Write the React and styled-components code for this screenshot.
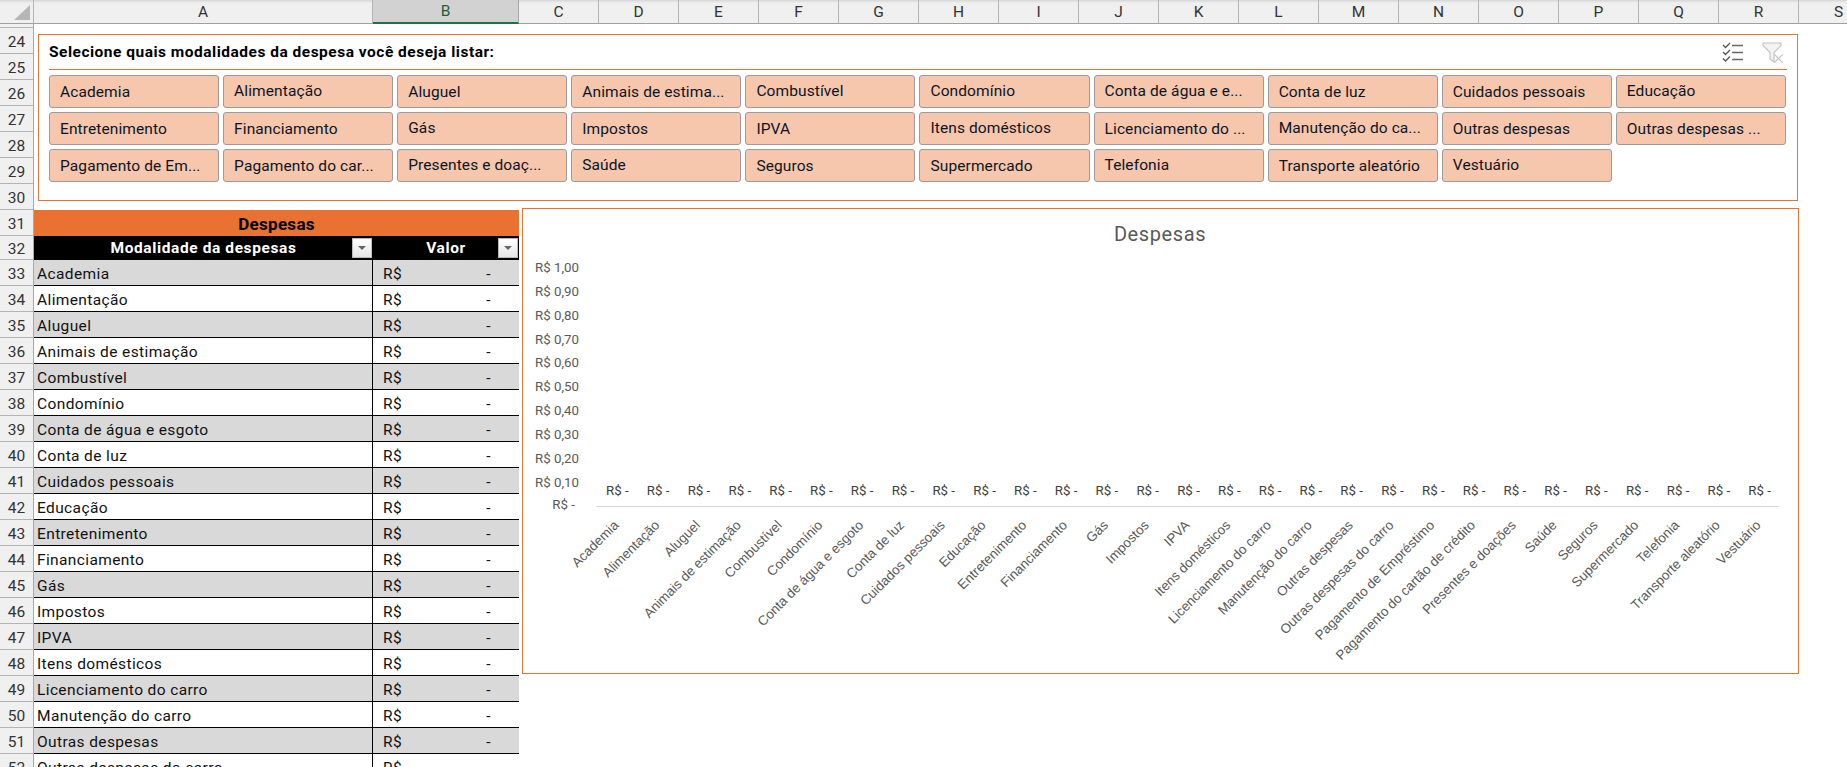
import React from "react";
import styled, { createGlobalStyle } from "styled-components";

const ORANGE = "#E97132";
const FONT = `Roboto, "Liberation Sans", sans-serif`;

const GlobalStyle = createGlobalStyle`
  html, body {
    margin: 0;
    padding: 0;
    height: 100%;
    overflow: hidden;
    background: #ffffff;
    font-family: ${FONT};
  }
`;

// Excel frame

const Page = styled.div`
  width: 1847px;
  height: 767px;
  overflow: hidden;
`;

const ColumnBar = styled.div`
  display: flex;
  height: 24px;
  box-sizing: border-box;
  background: linear-gradient(#d6d6d6 0, #efefef 3px, #f0f0f0 100%);
`;

const Corner = styled.div`
  width: 34px;
  flex: none;
  box-sizing: border-box;
  border-right: 1px solid #b4b4b4;
  border-bottom: 1px solid #a0a0a0;
  position: relative;
  display: flex;
  align-items: flex-end;
  justify-content: flex-end;
  padding: 0 3px 3px 0;
`;

const CornerMark = styled.div`
  width: 16px;
  height: 15px;
  background: #b6b6b6;
  clip-path: polygon(100% 0, 100% 100%, 0 100%);
`;

const ColumnCell = styled.div`
  width: ${(p) => p.$width}px;
  flex: none;
  box-sizing: border-box;
  display: flex;
  align-items: center;
  justify-content: center;
  font-size: 15.5px;
  color: ${(p) => (p.$active ? "#1f5f3d" : "#333333")};
  background: ${(p) => (p.$active ? "#d2d2d2" : "transparent")};
  border-right: 1px solid ${(p) => (p.$active ? "#a8a8a8" : "#b4b4b4")};
  border-bottom: ${(p) => (p.$active ? "2px solid #1e7145" : "1px solid #a0a0a0")};
`;

const Body = styled.div`
  display: flex;
  align-items: flex-start;
`;

const RowBar = styled.div`
  width: 34px;
  flex: none;
  display: flex;
  flex-direction: column;
  background: #f0f0f0;
  border-right: 1px solid #a8a8a8;
  box-sizing: border-box;
`;

const RowSliver = styled.div`
  height: 4px;
  box-sizing: border-box;
  border-bottom: 1px solid #b4b4b4;
`;

const RowCell = styled.div`
  height: ${(p) => p.$height}px;
  flex: none;
  box-sizing: border-box;
  display: flex;
  align-items: center;
  justify-content: center;
  padding-top: 3px;
  font-size: 15.5px;
  color: #333333;
  border-bottom: 1px solid #b4b4b4;
`;

const Sheet = styled.div`
  flex: 1;
  min-width: 0;
  padding-top: 10px;
  display: flex;
  flex-direction: column;
  gap: 7px;
`;

// Slicer

const Slicer = styled.section`
  width: 1760px;
  height: 167px;
  margin-left: 4px;
  box-sizing: border-box;
  border: 1px solid ${ORANGE};
  padding: 0 10px;
  display: flex;
  flex-direction: column;
`;

const SlicerHeader = styled.header`
  height: 35px;
  flex: none;
  box-sizing: border-box;
  border-bottom: 1px solid ${ORANGE};
  display: flex;
  align-items: center;
  justify-content: space-between;
  padding-right: 4px;
`;

const SlicerTitle = styled.h2`
  margin: 0;
  font-size: 15.5px;
  font-weight: 700;
  color: #000000;
  letter-spacing: 0.5px;
`;

const SlicerTools = styled.div`
  display: flex;
  gap: 19px;
  align-items: center;
`;

const ButtonGrid = styled.div`
  margin-top: 5px;
  display: grid;
  grid-template-columns: repeat(10, 170.1px);
  grid-auto-rows: 33px;
  column-gap: 4px;
  row-gap: 4px;
`;

const SlicerButton = styled.div`
  box-sizing: border-box;
  background: #f6c6ad;
  border: 1px solid #9b9b9b;
  border-radius: 3px;
  display: flex;
  align-items: center;
  padding: 0 0 ${(p) => (p.$lift ? 2 : 0)}px 10px;
  font-size: 15.5px;
  letter-spacing: 0.1px;
  color: #0c1522;
  white-space: nowrap;
  overflow: hidden;
`;

// Table + chart

const Content = styled.div`
  display: flex;
  align-items: flex-start;
  gap: 3px;
`;

const Table = styled.div`
  width: 485px;
  flex: none;
  padding-top: 2px;
  display: flex;
  flex-direction: column;
`;

const TableTitle = styled.div`
  height: 26px;
  background: ${ORANGE};
  display: flex;
  align-items: center;
  justify-content: center;
  font-size: 17px;
  letter-spacing: 0.3px;
  font-weight: 700;
  color: #000000;
  padding-top: 2px;
  box-sizing: border-box;
`;

const HeadRow = styled.div`
  height: 24px;
  display: grid;
  grid-template-columns: 339px 146px;
  background: #000000;
`;

const HeadCell = styled.div`
  display: flex;
  align-items: center;
  justify-content: center;
  position: relative;
  color: #ffffff;
  font-size: 15.5px;
  letter-spacing: 0.6px;
  font-weight: 700;
`;

const FilterButton = styled.span`
  position: absolute;
  right: 1px;
  top: 2px;
  width: 20px;
  height: 20px;
  box-sizing: border-box;
  border: 1px solid #bbbbbb;
  background: linear-gradient(#ffffff, #e6e6e6);
  display: flex;
  align-items: center;
  justify-content: center;

  &::after {
    content: "";
    border-left: 4px solid transparent;
    border-right: 4px solid transparent;
    border-top: 4px solid #666666;
  }
`;

const DataRow = styled.div`
  height: 26px;
  flex: none;
  box-sizing: border-box;
  display: grid;
  grid-template-columns: 339px 146px;
  background: ${(p) => (p.$shaded ? "#d9d9d9" : "#ffffff")};
  border-bottom: 1px solid #000000;
  font-size: 15.5px;
  letter-spacing: 0.38px;
  color: #111111;
`;

const NameCell = styled.div`
  box-sizing: border-box;
  border-right: 1px solid #000000;
  padding: 3px 0 0 3px;
  display: flex;
  align-items: center;
  white-space: nowrap;
`;

const ValueCell = styled.div`
  padding: 3px 28px 0 10px;
  display: flex;
  align-items: center;
  justify-content: space-between;
`;

const ChartBox = styled.div`
  width: 1277px;
  height: 466px;
  flex: none;
  box-sizing: border-box;
  border: 1px solid ${ORANGE};
  background: #ffffff;
`;

const ChartSvg = styled.svg`
  display: block;
  width: 1275px;
  height: 464px;
`;

const ChartTitle = styled.text`
  font-family: ${FONT};
  font-size: 20px;
  letter-spacing: 0.6px;
  fill: #595959;
  text-anchor: middle;
`;

const AxisLabel = styled.text`
  font-family: ${FONT};
  font-size: 13.3px;
  fill: #595959;
  text-anchor: end;
`;

const DataLabel = styled.text`
  font-family: ${FONT};
  font-size: 13.3px;
  fill: #404040;
  text-anchor: middle;
`;

const CategoryLabel = styled.text`
  font-family: "Liberation Sans", sans-serif;
  font-size: 13.4px;
  fill: #595959;
  text-anchor: end;
`;

const columns = [
  ["A", 339],
  ["B", 146],
  ..."CDEFGHIJKLMNOPQRS".split("").map((c) => [c, 80]),
];

const rowNumbers = [];
for (let n = 24; n <= 52; n++) rowNumbers.push(n);

const slicerItems = [
  ["Academia"],
  ["Alimentação", true],
  ["Aluguel"],
  ["Animais de estima..."],
  ["Combustível", true],
  ["Condomínio", true],
  ["Conta de água e e...", true],
  ["Conta de luz"],
  ["Cuidados pessoais"],
  ["Educação", true],
  ["Entretenimento"],
  ["Financiamento"],
  ["Gás", true],
  ["Impostos"],
  ["IPVA"],
  ["Itens domésticos", true],
  ["Licenciamento do ..."],
  ["Manutenção do ca...", true],
  ["Outras despesas"],
  ["Outras despesas ..."],
  ["Pagamento de Em..."],
  ["Pagamento do car..."],
  ["Presentes e doaç...", true],
  ["Saúde", true],
  ["Seguros"],
  ["Supermercado"],
  ["Telefonia", true],
  ["Transporte aleatório"],
  ["Vestuário", true],
];

const tableRows = [
  "Academia",
  "Alimentação",
  "Aluguel",
  "Animais de estimação",
  "Combustível",
  "Condomínio",
  "Conta de água e esgoto",
  "Conta de luz",
  "Cuidados pessoais",
  "Educação",
  "Entretenimento",
  "Financiamento",
  "Gás",
  "Impostos",
  "IPVA",
  "Itens domésticos",
  "Licenciamento do carro",
  "Manutenção do carro",
  "Outras despesas",
  "Outras despesas do carro",
];

const categories = [
  "Academia",
  "Alimentação",
  "Aluguel",
  "Animais de estimação",
  "Combustível",
  "Condomínio",
  "Conta de água e esgoto",
  "Conta de luz",
  "Cuidados pessoais",
  "Educação",
  "Entretenimento",
  "Financiamento",
  "Gás",
  "Impostos",
  "IPVA",
  "Itens domésticos",
  "Licenciamento do carro",
  "Manutenção do carro",
  "Outras despesas",
  "Outras despesas do carro",
  "Pagamento de Empréstimo",
  "Pagamento do cartão de crédito",
  "Presentes e doações",
  "Saúde",
  "Seguros",
  "Supermercado",
  "Telefonia",
  "Transporte aleatório",
  "Vestuário",
];

const axisTicks = ["R$ 1,00", "R$ 0,90", "R$ 0,80", "R$ 0,70", "R$ 0,60", "R$ 0,50", "R$ 0,40", "R$ 0,30", "R$ 0,20", "R$ 0,10"];

function MultiSelectIcon() {
  return (
    <svg width="21" height="20" viewBox="0 0 21 20" fill="none">
      <path d="M1 3l2.5 2.5L8 1M1 10l2.5 2.5L8 8M1 16.5L3.5 19 8 14.5" stroke="#555555" strokeWidth="1.3" />
      <path d="M10 3.5h11M10 10.5h11M10 17.5h11" stroke="#666666" strokeWidth="1.6" />
    </svg>
  );
}

function ClearFilterIcon() {
  return (
    <svg width="21" height="21" viewBox="0 0 21 21" fill="none">
      <path d="M1 1h18v2.5L12 10.5V20l-4-3v-6.5L1 3.5z" fill="#f3f3f3" stroke="#c4c4c4" strokeWidth="1.2" />
      <path d="M12.5 12.5l8 8M20.5 12.5l-8 8" stroke="#c4c4c4" strokeWidth="1.2" />
    </svg>
  );
}

function Chart() {
  const left = 596;
  const step = (1779 - 596) / categories.length;
  return (
    <ChartSvg viewBox="523 209 1275 464">
      <ChartTitle x="1160" y="241">Despesas</ChartTitle>
      {axisTicks.map((tick, i) => (
        <AxisLabel key={tick} x="579" y={272 + i * 23.85}>{tick}</AxisLabel>
      ))}
      <AxisLabel x="575" y="509">R$ -</AxisLabel>
      <line x1={left} x2="1779" y1="506.5" y2="506.5" stroke="#d9d9d9" strokeWidth="1" />
      {categories.map((name, i) => {
        const cx = left + step * (i + 0.5);
        return (
          <React.Fragment key={name}>
            <DataLabel x={cx + 1} y="495">R$ -</DataLabel>
            <CategoryLabel x={cx + 3} y="526" transform={`rotate(-45 ${cx + 3} 526)`}>{name}</CategoryLabel>
          </React.Fragment>
        );
      })}
    </ChartSvg>
  );
}

export default function App() {
  return (
    <Page>
      <GlobalStyle />
      <ColumnBar>
        <Corner><CornerMark /></Corner>
        {columns.map(([name, width]) => (
          <ColumnCell key={name} $width={width} $active={name === "B"}>{name}</ColumnCell>
        ))}
      </ColumnBar>
      <Body>
        <RowBar>
          <RowSliver />
          {rowNumbers.map((n) => (
            <RowCell key={n} $height={n === 32 ? 24 : 26}>{n}</RowCell>
          ))}
        </RowBar>
        <Sheet>
          <Slicer>
            <SlicerHeader>
              <SlicerTitle>Selecione quais modalidades da despesa você deseja listar:</SlicerTitle>
              <SlicerTools>
                <MultiSelectIcon />
                <ClearFilterIcon />
              </SlicerTools>
            </SlicerHeader>
            <ButtonGrid>
              {slicerItems.map(([label, lift]) => (
                <SlicerButton key={label} $lift={lift}>{label}</SlicerButton>
              ))}
            </ButtonGrid>
          </Slicer>
          <Content>
            <Table>
              <TableTitle>Despesas</TableTitle>
              <HeadRow>
                <HeadCell>Modalidade da despesas<FilterButton /></HeadCell>
                <HeadCell>Valor<FilterButton /></HeadCell>
              </HeadRow>
              {tableRows.map((name, i) => (
                <DataRow key={name} $shaded={i % 2 === 0}>
                  <NameCell>{name}</NameCell>
                  <ValueCell><span>R$</span><span>-</span></ValueCell>
                </DataRow>
              ))}
            </Table>
            <ChartBox>
              <Chart />
            </ChartBox>
          </Content>
        </Sheet>
      </Body>
    </Page>
  );
}
